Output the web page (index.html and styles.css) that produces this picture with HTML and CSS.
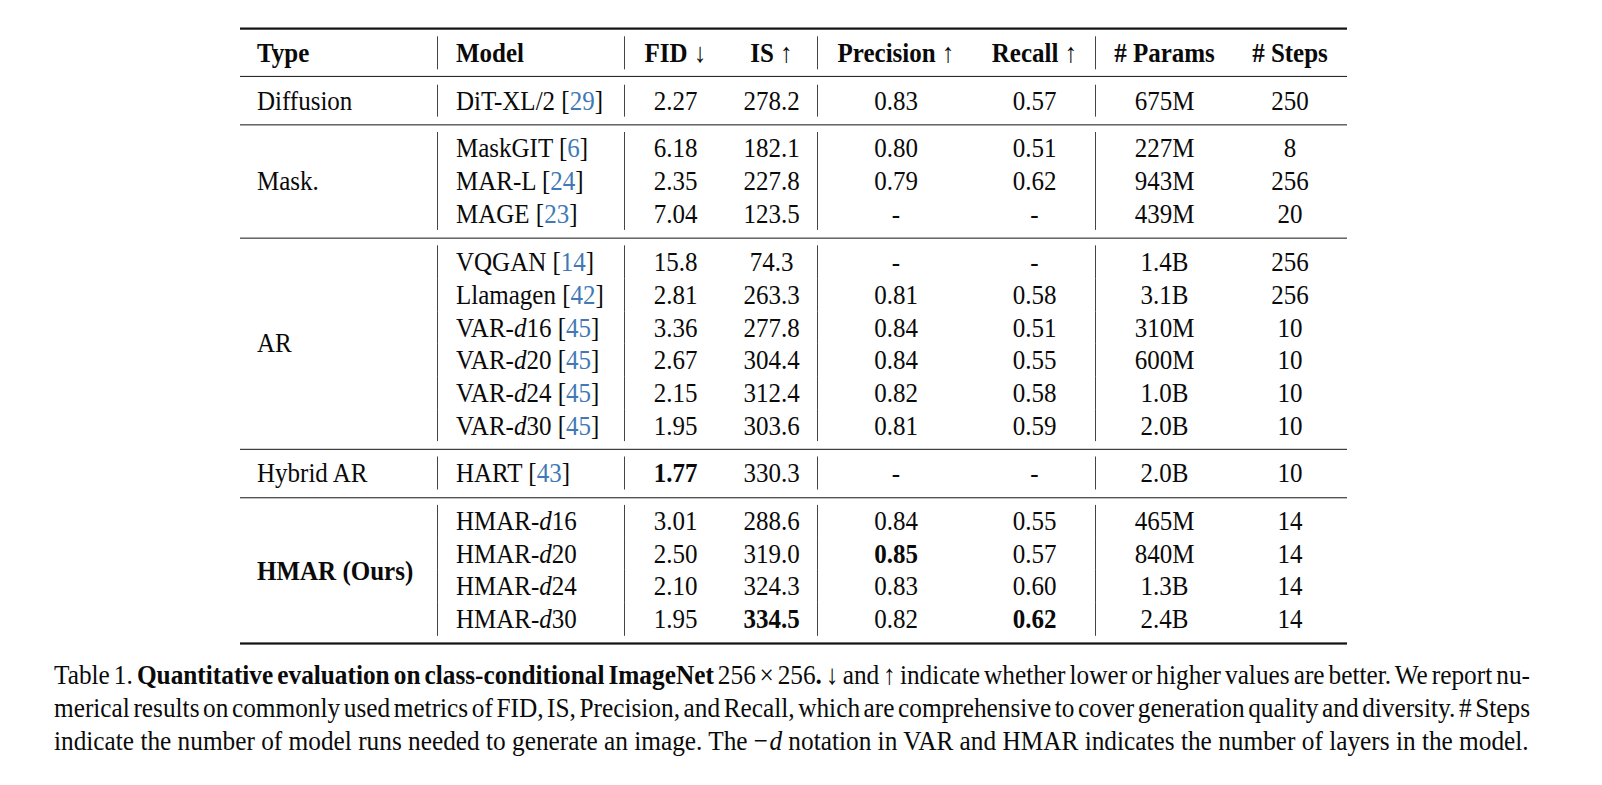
FILE: index.html
```html
<!DOCTYPE html>
<html>
<head>
<meta charset="utf-8">
<title>Table 1</title>
<link rel="stylesheet" href="styles.css">
</head>
<body>
<div class="page">
  <div class="table">
    <div class="group head">
      <div class="c t">Type</div>
      <div class="c m bar">Model</div>
      <div class="c bar">FID <span class="ar">↓</span></div>
      <div class="c">IS <span class="ar">↑</span></div>
      <div class="c bar">Precision <span class="ar">↑</span></div>
      <div class="c">Recall <span class="ar">↑</span></div>
      <div class="c bar"># Params</div>
      <div class="c"># Steps</div>
    </div>

    <div class="group">
      <div class="c t">Diffusion</div>
      <div class="c m bar">DiT-XL/2 [<span class="cite">29</span>]</div>
      <div class="c bar">2.27</div><div class="c">278.2</div>
      <div class="c bar">0.83</div><div class="c">0.57</div>
      <div class="c bar">675M</div><div class="c">250</div>
    </div>

    <div class="group">
      <div class="c t span3">Mask.</div>
      <div class="c m bar">MaskGIT [<span class="cite">6</span>]</div>
      <div class="c bar">6.18</div><div class="c">182.1</div>
      <div class="c bar">0.80</div><div class="c">0.51</div>
      <div class="c bar">227M</div><div class="c">8</div>

      <div class="c m bar">MAR-L [<span class="cite">24</span>]</div>
      <div class="c bar">2.35</div><div class="c">227.8</div>
      <div class="c bar">0.79</div><div class="c">0.62</div>
      <div class="c bar">943M</div><div class="c">256</div>

      <div class="c m bar">MAGE [<span class="cite">23</span>]</div>
      <div class="c bar">7.04</div><div class="c">123.5</div>
      <div class="c bar">-</div><div class="c">-</div>
      <div class="c bar">439M</div><div class="c">20</div>
    </div>

    <div class="group">
      <div class="c t span6">AR</div>
      <div class="c m bar">VQGAN [<span class="cite">14</span>]</div>
      <div class="c bar">15.8</div><div class="c">74.3</div>
      <div class="c bar">-</div><div class="c">-</div>
      <div class="c bar">1.4B</div><div class="c">256</div>

      <div class="c m bar">Llamagen [<span class="cite">42</span>]</div>
      <div class="c bar">2.81</div><div class="c">263.3</div>
      <div class="c bar">0.81</div><div class="c">0.58</div>
      <div class="c bar">3.1B</div><div class="c">256</div>

      <div class="c m bar">VAR-<i>d</i>16 [<span class="cite">45</span>]</div>
      <div class="c bar">3.36</div><div class="c">277.8</div>
      <div class="c bar">0.84</div><div class="c">0.51</div>
      <div class="c bar">310M</div><div class="c">10</div>

      <div class="c m bar">VAR-<i>d</i>20 [<span class="cite">45</span>]</div>
      <div class="c bar">2.67</div><div class="c">304.4</div>
      <div class="c bar">0.84</div><div class="c">0.55</div>
      <div class="c bar">600M</div><div class="c">10</div>

      <div class="c m bar">VAR-<i>d</i>24 [<span class="cite">45</span>]</div>
      <div class="c bar">2.15</div><div class="c">312.4</div>
      <div class="c bar">0.82</div><div class="c">0.58</div>
      <div class="c bar">1.0B</div><div class="c">10</div>

      <div class="c m bar">VAR-<i>d</i>30 [<span class="cite">45</span>]</div>
      <div class="c bar">1.95</div><div class="c">303.6</div>
      <div class="c bar">0.81</div><div class="c">0.59</div>
      <div class="c bar">2.0B</div><div class="c">10</div>
    </div>

    <div class="group">
      <div class="c t">Hybrid AR</div>
      <div class="c m bar">HART [<span class="cite">43</span>]</div>
      <div class="c bar"><b>1.77</b></div><div class="c">330.3</div>
      <div class="c bar">-</div><div class="c">-</div>
      <div class="c bar">2.0B</div><div class="c">10</div>
    </div>

    <div class="group">
      <div class="c t span4"><b>HMAR (Ours)</b></div>
      <div class="c m bar">HMAR-<i>d</i>16</div>
      <div class="c bar">3.01</div><div class="c">288.6</div>
      <div class="c bar">0.84</div><div class="c">0.55</div>
      <div class="c bar">465M</div><div class="c">14</div>

      <div class="c m bar">HMAR-<i>d</i>20</div>
      <div class="c bar">2.50</div><div class="c">319.0</div>
      <div class="c bar"><b>0.85</b></div><div class="c">0.57</div>
      <div class="c bar">840M</div><div class="c">14</div>

      <div class="c m bar">HMAR-<i>d</i>24</div>
      <div class="c bar">2.10</div><div class="c">324.3</div>
      <div class="c bar">0.83</div><div class="c">0.60</div>
      <div class="c bar">1.3B</div><div class="c">14</div>

      <div class="c m bar">HMAR-<i>d</i>30</div>
      <div class="c bar">1.95</div><div class="c"><b>334.5</b></div>
      <div class="c bar">0.82</div><div class="c"><b>0.62</b></div>
      <div class="c bar">2.4B</div><div class="c">14</div>
    </div>
  </div>

  <div class="caption">
    <div class="ln">Table 1. <b>Quantitative evaluation on class-conditional ImageNet</b> 256<span class="bin">×</span>256<b>.</b> ↓ and ↑ indicate whether lower or higher values are better. We report nu-</div>
    <div class="ln">merical results on commonly used metrics of FID, IS, Precision, and Recall, which are comprehensive to cover generation quality and diversity. # Steps</div>
    <div class="ln last">indicate the number of model runs needed to generate an image. The <span class="minus">−</span><i>d</i> notation in VAR and HMAR indicates the number of layers in the model.</div>
  </div>
</div>
</body>
</html>
```

FILE: styles.css
```css
html, body {
  margin: 0;
  padding: 0;
  background: #ffffff;
}

body {
  min-height: 785px;
  font-family: "Liberation Serif", "Times New Roman", serif;
  color: #0a0a0a;
}

.page {
  width: 1476px;
  padding: 24.5px 0 0 54px;
  transform: scaleY(1.1);
  transform-origin: 0 0;
}

.table {
  width: 1107px;
  margin-left: 186px;
  border-top: 2px solid #111111;
  border-bottom: 2px solid #111111;
  font-size: 25px;
}

.group {
  display: grid;
  grid-template-columns: 197px 187px 102px 91px 157px 121px 138px 114px;
  grid-auto-rows: 29.73px;
  line-height: 29.73px;
  padding: 6.45px 0;
}

.group + .group {
  border-top: 1px solid #2a2a2a;
}

.head {
  font-weight: bold;
}

.ar {
  font-weight: normal;
}

.c {
  white-space: nowrap;
  text-align: center;
}

.t {
  text-align: left;
  padding-left: 17px;
  align-self: center;
}

.span3 { grid-row: span 3; }
.span4 { grid-row: span 4; }
.span6 { grid-row: span 6; }

.m {
  text-align: left;
  padding-left: 18px;
}

.bar {
  border-left: 1px solid #444444;
}

.cite {
  color: #4079b5;
}

.caption {
  margin-top: 11.7px;
  font-size: 25.3px;
  line-height: 30px;
}

.ln {
  text-align: justify;
  text-align-last: justify;
  word-spacing: -3px;
}

.ln.last {
  text-align-last: left;
  word-spacing: 0;
}

.bin {
  margin: 0 0.15em;
}

.minus {
  margin-right: 0.05em;
}
```
